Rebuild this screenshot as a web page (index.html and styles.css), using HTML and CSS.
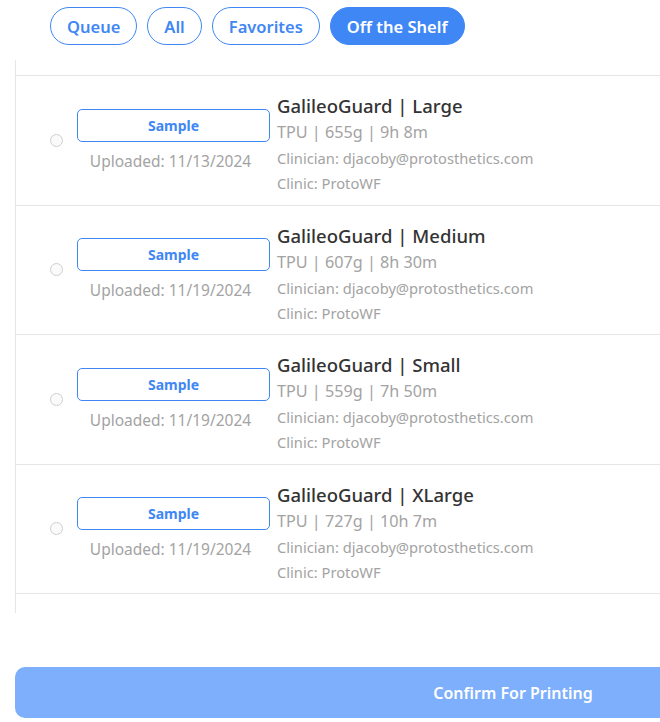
FILE: index.html
```html
<!DOCTYPE html>
<html lang="en">

<head>
    <meta charset="UTF-8">
    <meta name="viewport" content="width=device-width, initial-scale=1.0">
    <title>Off the Shelf</title>
    <link rel="stylesheet" href="styles.css">
</head>

<body>
    <div class="tabs">
        <button class="tab">Queue</button>
        <button class="tab">All</button>
        <button class="tab">Favorites</button>
        <button class="tab active">Off the Shelf</button>
    </div>

    <div class="list">
        <div class="row">
            <span class="radio"></span>
            <div class="left">
                <button class="sample">Sample</button>
                <div class="uploaded">Uploaded: 11/13/2024</div>
            </div>
            <div class="info">
                <div class="title">GalileoGuard | Large</div>
                <div class="specs">TPU | 655g | 9h 8m</div>
                <div class="meta">Clinician: djacoby@protosthetics.com</div>
                <div class="meta">Clinic: ProtoWF</div>
            </div>
        </div>
        <div class="row">
            <span class="radio"></span>
            <div class="left">
                <button class="sample">Sample</button>
                <div class="uploaded">Uploaded: 11/19/2024</div>
            </div>
            <div class="info">
                <div class="title">GalileoGuard | Medium</div>
                <div class="specs">TPU | 607g | 8h 30m</div>
                <div class="meta">Clinician: djacoby@protosthetics.com</div>
                <div class="meta">Clinic: ProtoWF</div>
            </div>
        </div>
        <div class="row">
            <span class="radio"></span>
            <div class="left">
                <button class="sample">Sample</button>
                <div class="uploaded">Uploaded: 11/19/2024</div>
            </div>
            <div class="info">
                <div class="title">GalileoGuard | Small</div>
                <div class="specs">TPU | 559g | 7h 50m</div>
                <div class="meta">Clinician: djacoby@protosthetics.com</div>
                <div class="meta">Clinic: ProtoWF</div>
            </div>
        </div>
        <div class="row">
            <span class="radio"></span>
            <div class="left">
                <button class="sample">Sample</button>
                <div class="uploaded">Uploaded: 11/19/2024</div>
            </div>
            <div class="info">
                <div class="title">GalileoGuard | XLarge</div>
                <div class="specs">TPU | 727g | 10h 7m</div>
                <div class="meta">Clinician: djacoby@protosthetics.com</div>
                <div class="meta">Clinic: ProtoWF</div>
            </div>
        </div>
    </div>

    <button class="confirm">Confirm For Printing</button>
</body>

</html>
```

FILE: styles.css
```css
body {
    margin: 0;
    font-family: "Noto Sans", Arial, sans-serif;
    background: #fff;
    color: #333;
    overflow: hidden;
    width: 1020px;
}

button {
    font-family: inherit;
    cursor: pointer;
}

.tabs {
    display: flex;
    gap: 10px;
    padding: 7px 0 0 50px;
}

.tab {
    height: 38px;
    padding: 0 16px;
    border: 1px solid #3f87f5;
    border-radius: 19px;
    background: #fff;
    color: #3f87f5;
    font-size: 16.5px;
    font-weight: 600;
}

.tab.active {
    background: #3f87f5;
    color: #fff;
}

.list {
    margin: 15px 0 0 15px;
    padding: 15px 0 19px;
    border-left: 1px solid #e6e6e6;
}

.row {
    display: flex;
    align-items: center;
    height: 128.5px;
    padding-left: 34px;
    border-top: 1px solid #e6e6e6;
}

.row:last-child {
    border-bottom: 1px solid #e6e6e6;
}

.radio {
    width: 11px;
    height: 11px;
    border: 1px solid #cfcfcf;
    border-radius: 50%;
    background: #fafafa;
}

.left {
    display: flex;
    flex-direction: column;
    align-items: center;
    margin-left: 14px;
    width: 193px;
}

.sample {
    width: 193px;
    height: 33px;
    border: 1px solid #3f87f5;
    border-radius: 5px;
    background: #fff;
    color: #3f87f5;
    font-size: 14px;
    font-weight: 700;
}

.uploaded {
    margin-top: 8px;
    margin-right: 6px;
    line-height: 22px;
    font-size: 15.5px;
    color: #a3a3a3;
}

.info {
    margin-left: 7px;
    padding-top: 8px;
}

.title {
    font-size: 18.5px;
    font-weight: 500;
    line-height: 27px;
    color: #333;
}

.specs {
    font-size: 16.2px;
    line-height: 27px;
    color: #a3a3a3;
}

.meta {
    font-size: 14.7px;
    line-height: 25px;
    color: #a3a3a3;
}

.confirm {
    display: block;
    margin: 54px 0 0 15px;
    width: 996px;
    height: 51px;
    border: none;
    border-radius: 10px;
    background: #7eaffc;
    color: #fff;
    font-size: 16px;
    font-weight: 600;
}
```
